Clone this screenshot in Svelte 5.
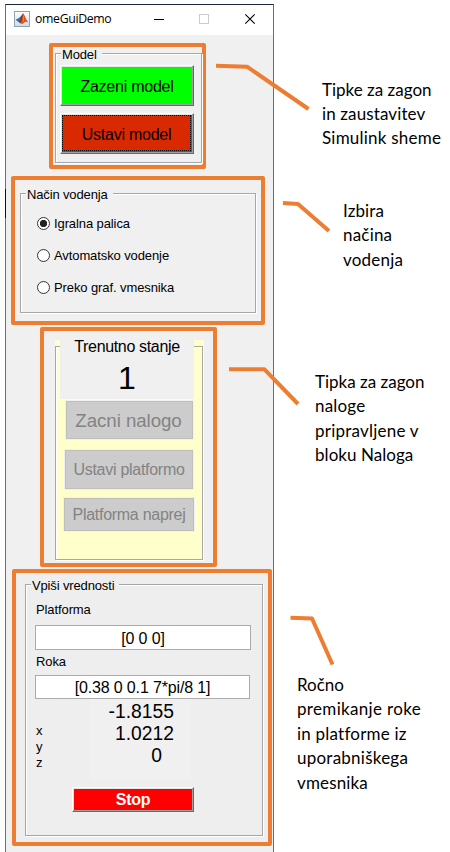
<script>
  let mode = $state(0);
  const modes = ['Igralna palica', 'Avtomatsko vodenje', 'Preko graf. vmesnika'];
  const actions = [
    { label: 'Zacni nalogo', name: 'task' },
    { label: 'Ustavi platformo', name: 'halt' },
    { label: 'Platforma naprej', name: 'forward' }
  ];
  // each line: text and tracking in px
  const notes = [
    { name: 'n1', lines: [['Tipke za zagon', 0], ['in zaustavitev', 0.12], ['Simulink sheme', 0.22]] },
    { name: 'n2', lines: [['Izbira', 0.1], ['načina', 0.2], ['vodenja', 0.2]] },
    { name: 'n3', lines: [['Tipka za zagon', 0], ['naloge', 0.2], ['pripravljene v', 0.22], ['bloku Naloga', 0.05]] },
    { name: 'n4', lines: [['Ročno', 0], ['premikanje roke', 0.33], ['in platforme iz', 0.22], ['uporabniškega', 0.24], ['vmesnika', 0.15]] }
  ];
  const leaders = [
    '216,65.7 247,66.7 308.5,109',
    '283,203 298,204 329,231',
    '229,369.3 264.5,369.3 298,404',
    '290.5,617.7 312,618.5 332.5,664.5'
  ];
</script>

<div class="page">
  <main class="window">
    <header class="titlebar">
      <svg class="logo" width="16" height="16" viewBox="0 0 16 16">
        <defs>
          <linearGradient id="tile" x1="0" y1="0" x2="0" y2="1">
            <stop offset="0" stop-color="#fdfeff" /><stop offset="1" stop-color="#cfdbe6" />
          </linearGradient>
        </defs>
        <rect x=".5" y=".5" width="15" height="15" fill="url(#tile)" stroke="#8fa3b5" />
        <path d="M1.5 8.7 5 7 7.4 4.8 6.8 9.8 4.4 11Z" fill="#2f73b4" />
        <path d="M7 5.2 9 2.3 9.2 9 6.2 12.3 4.6 10.9 6.3 8.8Z" fill="#8c2d24" />
        <path d="M9 2.3C10.4 3 11.6 8.3 14.3 11.3 12.4 10.5 11.2 10.4 9.8 12 8.5 13.4 7.4 12.8 6.2 12.3 8 10 8.2 6 9 2.3Z" fill="#d9541e" />
        <path d="M9.1 3.5C9.7 6 9.8 9 9.5 11.6 9 10 8.8 6 9.1 3.5Z" fill="#f5b13d" />
      </svg>
      <span class="title">omeGuiDemo</span>
      <svg class="controls" width="102" height="12" viewBox="0 0 102 12" fill="none">
        <path d="M0 6.5h10" stroke="#000" />
        <rect x="45.5" y="1.5" width="9" height="9" stroke="#ccc" />
        <path d="M91.3 1.3l9.4 9.4M100.7 1.3l-9.4 9.4" stroke="#000" stroke-width="1.1" />
      </svg>
    </header>

    <section class="frame f-model">
      <div class="group">
        <div class="legend"><span>Model</span></div>
        <button class="push start">Zazeni model</button>
        <button class="push end"><span>Ustavi model</span></button>
      </div>
    </section>

    <section class="frame f-mode">
      <div class="group">
        <div class="legend"><span>Način vodenja</span></div>
        {#each modes as label, i}
          <label class="radio">
            <input type="radio" name="mode" value={i} bind:group={mode} />
            <span>{label}</span>
          </label>
        {/each}
      </div>
    </section>

    <section class="frame f-state">
      <div class="yellow">
        <div class="group">
          <div class="status">
            <div class="caption">Trenutno stanje</div>
            <div class="value">1</div>
          </div>
          {#each actions as a}
            <button class="off {a.name}" disabled>{a.label}</button>
          {/each}
        </div>
      </div>
    </section>

    <section class="frame f-values">
      <div class="group">
        <div class="legend"><span>Vpiši vrednosti</span></div>
        <div class="field-label">Platforma</div>
        <div class="field first">[0 0 0]</div>
        <div class="field-label second">Roka</div>
        <div class="field last">[0.38 0 0.1 7*pi/8 1]</div>
        <div class="readout">
          <div class="axes"><div>x</div><div>y</div><div>z</div></div>
          <div class="numbers"><div>-1.8155</div><div>1.0212</div><div class="zero">0</div></div>
        </div>
        <button class="push stop">Stop</button>
      </div>
    </section>
  </main>

  <aside class="notes">
    {#each notes as n}
      <div class="note {n.name}">
        {#each n.lines as [text, tracking]}<div style="letter-spacing: {tracking}px">{text}</div>{/each}
      </div>
    {/each}
  </aside>

  <svg class="leaders" width="450" height="852" viewBox="0 0 450 852">
    {#each leaders as points}
      <polyline {points} fill="none" stroke="#ed7d31" stroke-width="4" stroke-linejoin="round" />
    {/each}
    <path d="M5.5 189v29" stroke="#111" />
  </svg>
</div>

<style>
  :global(body) { margin: 0; background: #fff; }
  .page {
    position: relative; display: flex; width: 450px; height: 852px; overflow: hidden;
    background: #fff; color: #000; font: 13px "Liberation Sans", Arial, sans-serif; white-space: nowrap;
  }
  .page * { box-sizing: border-box; }
  .window {
    width: 269px; height: 850px; margin: 4px 0 0 5px; flex: none;
    border: 1px solid #6b6e73; border-top-color: #1b2a3a; background: #f0f0f0;
  }
  .titlebar { display: flex; height: 30px; padding: 6px 0 0 8px; background: #fff; }
  .logo { flex: none; }
  .title { width: 74px; margin: 0 0 0 5px; font: 12px/16px "Open Sans", "Noto Sans", sans-serif; letter-spacing: -0.35px; }
  .title { font-size: 12.3px; }
  .controls { flex: none; margin: 2px 0 0 45px; }

  .frame { border: 4px solid #ed7d31; border-radius: 2px; }
  .group { border: 1px solid #a7a7a7; box-shadow: 1px 1px 0 #fff, inset 1px 1px 0 #fff; }
  .legend {
    width: fit-content; height: 14px; margin: -7px 0 0 5px; padding: 0 5px 0 1px;
    background: #f0f0f0; line-height: 14px; letter-spacing: -0.14px;
  }

  .f-model { width: 157px; height: 126px; margin: 8px 0 0 43px; padding: 6px 0 0 2px; }
  .f-model .group { width: 147px; height: 110px; }
  .f-model .legend { line-height: 16px; }
  .push {
    display: block; padding: 0; border: 1px solid; border-color: #fff #696969 #696969 #fff;
    border-radius: 0; font: 16px "Liberation Sans", Arial, sans-serif; color: #000; letter-spacing: -0.24px;
    box-shadow: inset -1px -1px 0 #a0a0a0, inset 1px 1px 0 #e3e3e3;
  }
  .start { width: 134px; height: 41px; margin: 4px 0 0 4px; padding-top: 2px; background: #0f0; }
  .end { width: 134px; height: 41px; margin: 7px 0 0 4px; padding: 1px 2px 2px 1px; background: #d92900; }
  .end span { display: block; height: 36px; border: 1px dotted #000; line-height: 37px; }

  .f-mode { width: 254px; height: 149px; margin: 7px 0 0 5px; padding: 13px 0 0 5px; }
  .f-mode .group { width: 236px; height: 120px; }
  .radio { display: flex; align-items: center; height: 32px; padding-left: 16px; letter-spacing: -0.1px; }
  .f-mode .legend { line-height: 15px; }
  .f-mode .legend + .radio { margin-top: 6px; }
  .radio input {
    appearance: none; width: 13px; height: 13px; margin: 0 4px 0 0; flex: none;
    border: 1px solid #333; border-radius: 50%; background: #fff;
  }
  .radio input:checked { background: radial-gradient(circle, #222 0 3.3px, #fff 4px); }

  .f-state { width: 177px; height: 240px; margin: 2px 0 0 34px; padding: 9px 0 0 11px; }
  .yellow { width: 149px; height: 221px; padding-top: 6px; background: #ffc; }
  .f-state .group { width: 148px; height: 214px; }
  .status { width: 134px; height: 61px; margin: -9px 0 0 4px; background: #f0f0f0; text-align: center; }
  .caption { height: 18px; font-size: 16px; line-height: 18px; letter-spacing: -0.34px; }
  .value { margin-top: 4px; font-size: 32px; line-height: 36px; }
  .off {
    display: block; padding: 0; border: 1px solid #f0f0f0; border-radius: 0; background: #ccc;
    box-shadow: inset 0 0 0 1px #bfbfbf; color: #838383; font: 16px "Liberation Sans", Arial, sans-serif;
    letter-spacing: -0.28px;
  }
  .task { width: 129px; height: 40px; margin: 1px 0 0 9px; padding: 1px 2px 0 0; font-size: 18.7px; letter-spacing: -0.05px; }
  .halt { width: 130px; height: 41px; margin: 9px 0 0 8px; }
  .forward { width: 132px; height: 35px; margin: 7px 0 0 7px; padding-top: 1px; }

  .f-values { width: 260px; height: 277px; margin: 2px 0 0 6px; padding: 11px 0 0 9px; background: #eee; }
  .f-values .group { width: 238px; height: 252px; }
  .f-values .legend { background: #eee; line-height: 15px; }
  .field-label { height: 14px; margin: 11px 0 0 10px; line-height: 14px; letter-spacing: -0.1px; }
  .second { margin-top: 5px; }
  .field {
    width: 216px; height: 25px; margin: 8px 0 0 9px; border: 1px solid #ababab; background: #fff;
    font-size: 16px; line-height: 25px; text-align: center; letter-spacing: -0.15px;
  }
  .last { width: 215px; height: 24px; margin-top: 6px; line-height: 24px; }
  .readout { display: flex; height: 82px; margin-left: 10px; }
  .axes { width: 54px; padding-top: 24px; line-height: 16px; }
  .numbers { width: 101px; padding: 2px 17px 0 0; background: #f0f0f0; font-size: 19.3px; line-height: 22px; text-align: right; }
  .zero { padding-right: 12px; }
  .stop { width: 122px; height: 25px; margin: 6px 0 0 46px; padding-top: 1px; background: #f00; color: #fff; font-weight: bold; }

  .notes { flex: none; width: 176px; font: 17px/24.4px Lato, Carlito, Calibri, sans-serif; }
  .n1 { height: 121px; margin: 78px 0 0 48px; line-height: 24px; }
  .n2 { height: 171px; margin-left: 69px; }
  .n3 { height: 303px; margin-left: 41px; }
  .n4 { margin-left: 23px; }
  .leaders { position: absolute; left: 0; top: 0; pointer-events: none; }
</style>
